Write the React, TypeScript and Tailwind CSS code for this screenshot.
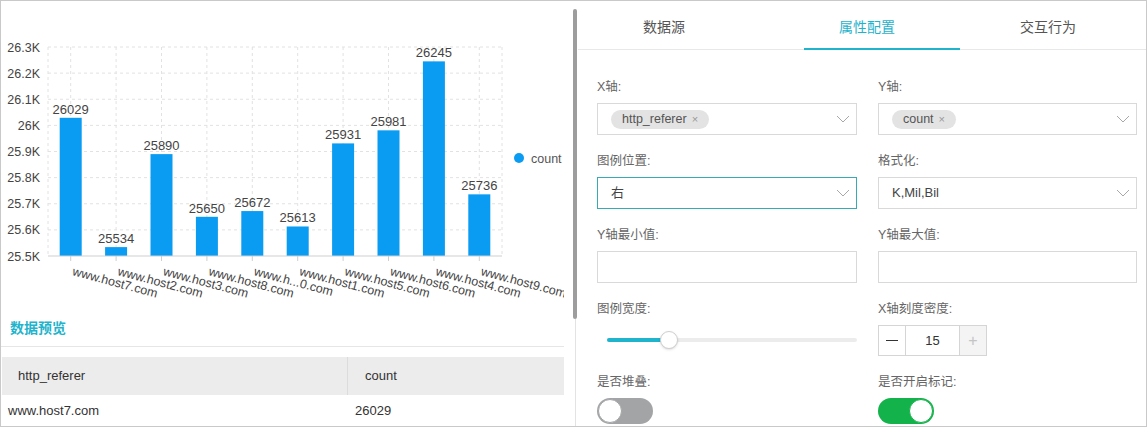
import React from 'react';

const values = [26029, 25534, 25890, 25650, 25672, 25613, 25931, 25981, 26245, 25736];
const hosts = [
  'www.host7.com',
  'www.host2.com',
  'www.host3.com',
  'www.host8.com',
  'www.h...0.com',
  'www.host1.com',
  'www.host5.com',
  'www.host6.com',
  'www.host4.com',
  'www.host9.com',
];
const ticks = ['26.3K', '26.2K', '26.1K', '26K', '25.9K', '25.8K', '25.7K', '25.6K', '25.5K'];

const X0 = 48;
const X1 = 502;
const TOP = 47;
const BASE = 256;
const STEP = (X1 - X0) / values.length;
const yOf = (v: number) => BASE - ((v - 25500) / 800) * (BASE - TOP);

const BarChart = () => {
  const centers = values.map((_, i) => X0 + STEP * (i + 0.5));
  return (
    <svg width={563} height={306} className="block shrink-0">
      <g transform="translate(-1,-1)" fontFamily="'Liberation Sans', Arial, sans-serif">
        {ticks.map((t, i) => {
          const y = TOP + i * ((BASE - TOP) / 8);
          return (
            <g key={t}>
              {i < 8 && (
                <line x1={X0} x2={X1} y1={y} y2={y} stroke="#e2e2e2" strokeDasharray="3 3" />
              )}
              <text x={40} y={y + 4.5} textAnchor="end" fontSize={12.5} fill="#444">
                {t}
              </text>
            </g>
          );
        })}
        {[X0, ...centers, X1].map((x, i) => (
          <line key={i} x1={x} x2={x} y1={TOP} y2={BASE} stroke="#e2e2e2" strokeDasharray="3 3" />
        ))}
        {values.map((v, i) => {
          const cx = centers[i];
          const y = yOf(v);
          return (
            <g key={i}>
              <rect x={cx - 11} y={y} width={22} height={BASE - y} fill="#0a9bf2" />
              <text x={cx} y={y - 4} textAnchor="middle" fontSize={13} fill="#444">
                {v}
              </text>
              <line x1={cx} x2={cx} y1={BASE} y2={BASE + 5} stroke="#cfcfcf" />
              <text
                x={cx + 1}
                y={BASE + 19}
                fontSize={12.5}
                fill="#444"
                transform={`rotate(15 ${cx + 1} ${BASE + 19})`}
              >
                {hosts[i]}
              </text>
            </g>
          );
        })}
        <line x1={X0} x2={X1} y1={BASE} y2={BASE} stroke="#cfcfcf" />
        <circle cx={519} cy={158} r={5} fill="#0a9bf2" />
        <text x={531} y={162.5} fontSize={12.5} fill="#555">
          count
        </text>
      </g>
    </svg>
  );
};

const Chevron = () => (
  <svg width="14" height="8" viewBox="0 0 14 8" className="shrink-0">
    <polyline points="1,1 7,7 13,1" fill="none" stroke="#a8a8a8" strokeWidth="1" />
  </svg>
);

const Chip = ({ label }: { label: string }) => (
  <span className="flex items-center h-[19px] px-[11px] rounded-full bg-[#e3e3e3] text-[12.5px] text-[#555]">
    {label}
    <span className="ml-[5px] text-[11px] text-[#999]">×</span>
  </span>
);

const Field = ({ label, children }: { label: string; children: React.ReactNode }) => (
  <div className="flex flex-col">
    <div className="h-4 leading-4 text-[12.5px] text-[#666]">{label}</div>
    <div className="mt-2">{children}</div>
  </div>
);

const SelectBox = ({ children, active }: { children?: React.ReactNode; active?: boolean }) => (
  <div
    className={`h-8 flex items-center justify-between pl-[13px] pr-[6px] border bg-white ${
      active ? 'border-[#39a9b6]' : 'border-[#d9d9d9]'
    }`}
  >
    <div className="flex items-center text-[13px] text-[#444]">{children}</div>
    <Chevron />
  </div>
);

const Switch = ({ on }: { on?: boolean }) => (
  <div
    className={`w-14 h-[26px] rounded-full flex items-center p-px ${
      on ? 'bg-[#13b24a] justify-end' : 'bg-[#a3a4a6] justify-start'
    }`}
  >
    <div
      className={`w-6 h-6 rounded-full bg-white border ${on ? 'border-[#13b24a]' : 'border-[#a3a4a6]'}`}
    />
  </div>
);

export default function App() {
  return (
    <div className="w-[1147px] h-[427px] flex border border-[#c9c9c9] bg-white overflow-hidden font-['Liberation_Sans','Noto_Sans_CJK_SC',sans-serif]">
      {/* left: chart + preview */}
      <div className="w-[572px] shrink-0 flex flex-col">
        <BarChart />
        <div className="w-[563px] flex flex-col">
          <div className="h-[40px] flex items-center pl-[9px] pt-[3px] border-b border-[#e6e6e6] text-[14px] font-bold text-[#1fb3cc]">
            数据预览
          </div>
          <div className="mt-[10px] ml-px flex h-[38px] bg-[#ececec] text-[13px] text-[#333]">
            <div className="w-[346px] flex items-center pl-[16px] border-r border-[#dcdcdc]">http_referer</div>
            <div className="flex-1 flex items-center pl-[17px]">count</div>
          </div>
          <div className="flex h-[32px] text-[13px] text-[#333]">
            <div className="w-[347px] flex items-center pl-[7px]">www.host7.com</div>
            <div className="flex-1 flex items-center pl-[7px]">26029</div>
          </div>
        </div>
      </div>

      {/* scrollbar */}
      <div className="w-[5px] shrink-0 flex flex-col pt-[8px]">
        <div className="h-[310px] w-[4px] rounded-sm bg-[#9d9d9d]" />
        <div className="flex-1 w-px ml-[2px] bg-[#e3e3e3]" />
      </div>

      {/* right: config */}
      <div className="flex-1 flex flex-col">
        <div className="relative h-[49px] shrink-0 flex border-b border-[#e8e8e8] text-[14px] text-[#555] pt-[4px]">
          <div className="w-[172px] flex items-center justify-center">数据源</div>
          <div className="w-[234px] flex items-center justify-center text-[#1fb3cc]">属性配置</div>
          <div className="w-[128px] flex items-center justify-center">交互行为</div>
          <div className="absolute left-[226px] bottom-[-1px] w-[156px] h-[2px] bg-[#1fb3cc]" />
        </div>

        <div className="grid grid-cols-[260px_259px] gap-x-[21px] gap-y-[18px] pl-[19px] pt-[29px]">
          <Field label="X轴:">
            <SelectBox>
              <Chip label="http_referer" />
            </SelectBox>
          </Field>
          <Field label="Y轴:">
            <SelectBox>
              <Chip label="count" />
            </SelectBox>
          </Field>

          <Field label="图例位置:">
            <SelectBox active>右</SelectBox>
          </Field>
          <Field label="格式化:">
            <SelectBox>K,Mil,Bil</SelectBox>
          </Field>

          <Field label="Y轴最小值:">
            <div className="h-8 border border-[#d9d9d9]" />
          </Field>
          <Field label="Y轴最大值:">
            <div className="h-8 border border-[#d9d9d9]" />
          </Field>

          <Field label="图例宽度:">
            <div className="h-[30px] flex items-center pl-[10px]">
              <div className="flex-1 h-1 rounded-full bg-[#ececec] flex items-center">
                <div className="w-[55px] h-1 rounded-full bg-[#1fb3cc]" />
                <div className="-ml-[2px] w-[18px] h-[18px] rounded-full bg-white border border-[#cfcfcf] shadow-sm" />
              </div>
            </div>
          </Field>
          <Field label="X轴刻度密度:">
            <div className="w-[109px] h-[31px] flex border border-[#d5d5d5] text-[13px] text-[#333]">
              <div className="w-[27px] flex items-center justify-center border-r border-[#d5d5d5]">
                <div className="w-[12px] h-[1.5px] bg-[#333]" />
              </div>
              <div className="w-[54px] flex items-center justify-center border-r border-[#d5d5d5]">15</div>
              <div className="flex-1 flex items-center justify-center bg-[#f4f4f4] text-[16px] font-light text-[#c4c4c4]">
                +
              </div>
            </div>
          </Field>

          <Field label="是否堆叠:">
            <Switch />
          </Field>
          <Field label="是否开启标记:">
            <Switch on />
          </Field>
        </div>
      </div>
    </div>
  );
}
